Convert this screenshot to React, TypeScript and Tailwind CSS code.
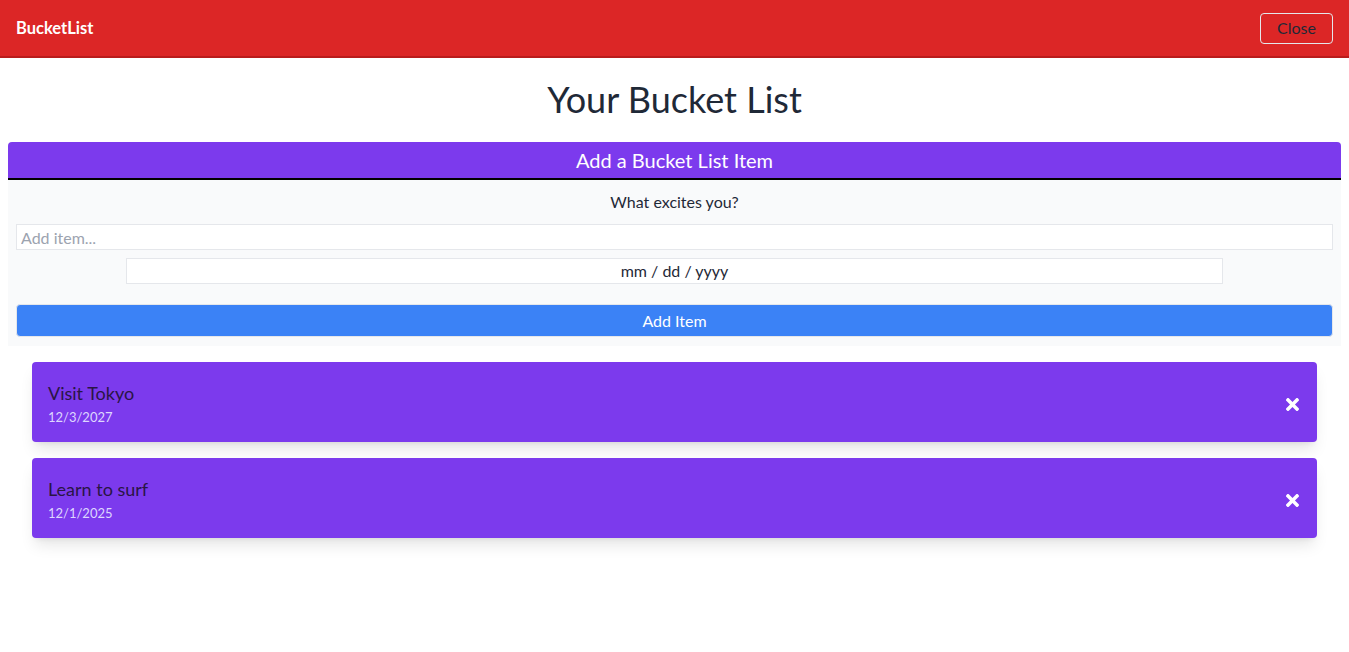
import React, { useState } from "react";
import { FaTimes } from "react-icons/fa";

type Item = { id: number; title: string; date: string };

export default function App() {
  const [items, setItems] = useState<Item[]>([
    { id: 1, title: "Visit Tokyo", date: "12/3/2027" },
    { id: 2, title: "Learn to surf", date: "12/1/2025" },
  ]);
  const [text, setText] = useState("");
  const [date, setDate] = useState("");

  const addItem = () => {
    if (!text.trim()) return;
    setItems(prev => [...prev, { id: Date.now(), title: text, date }]);
    setText("");
    setDate("");
  };

  return (
    <div className="min-h-screen bg-white text-[#1f2937] font-['Lato',sans-serif]">
      {/* Top navbar */}
      <nav className="h-[58px] bg-[#dc2626] border-b-2 border-[#b91c1c] flex items-center justify-between px-4">
        <span className="text-white font-bold text-[16.5px]">BucketList</span>
        <button className="h-[31px] px-4 border border-[#e5e7eb] rounded text-[#1f2937] text-base">Close</button>
      </nav>

      <h1 className="text-4xl text-center mt-[20px] mb-[22px] leading-[42px]">Your Bucket List</h1>

      {/* Add form card */}
      <div className="mx-2 rounded-t bg-[#f9fafb]">
        <div className="bg-[#7c3aed] rounded-t h-[38px] border-b-2 border-black flex items-center justify-center">
          <span className="text-white text-xl">Add a Bucket List Item</span>
        </div>
        <div className="px-2 pt-2 pb-[9px] flex flex-col">
          <label className="text-center text-base h-[36px] leading-[24px] pt-[2px]">What excites you?</label>
          <input
            value={text}
            onChange={e => setText(e.target.value)}
            placeholder="Add item..."
            className="h-[26px] border border-[#e5e7eb] bg-white px-1 text-base placeholder:text-[#9ca3af] outline-none"
          />
          <div className="w-5/6 mx-auto mt-2 h-[26px] border border-[#e5e7eb] bg-white flex items-center justify-center text-base">
            {date || "mm / dd / yyyy"}
          </div>
          <button
            onClick={addItem}
            className="mt-5 h-[33px] bg-[#3b82f6] text-white text-base rounded-sm border border-[#e5e7eb]"
          >
            Add Item
          </button>
        </div>
      </div>

      {/* Items */}
      <div className="mx-8 mt-4 flex flex-col gap-4">
        {items.map(item => (
          <div key={item.id} className="h-[80px] bg-[#7c3aed] rounded shadow-lg pl-4 pr-[15px] pt-[4px] flex items-center justify-between">
            <div className="flex flex-col">
              <span className="text-lg text-[#2a1545] leading-6">{item.title}</span>
              <span className="text-[13px] text-[#ddd6fe] leading-5 mt-[2px]">{item.date}</span>
            </div>
            <button
              onClick={() => setItems(prev => prev.filter(i => i.id !== item.id))}
              className="text-white"
            >
              <FaTimes size={19} />
            </button>
          </div>
        ))}
      </div>
    </div>
  );
}
